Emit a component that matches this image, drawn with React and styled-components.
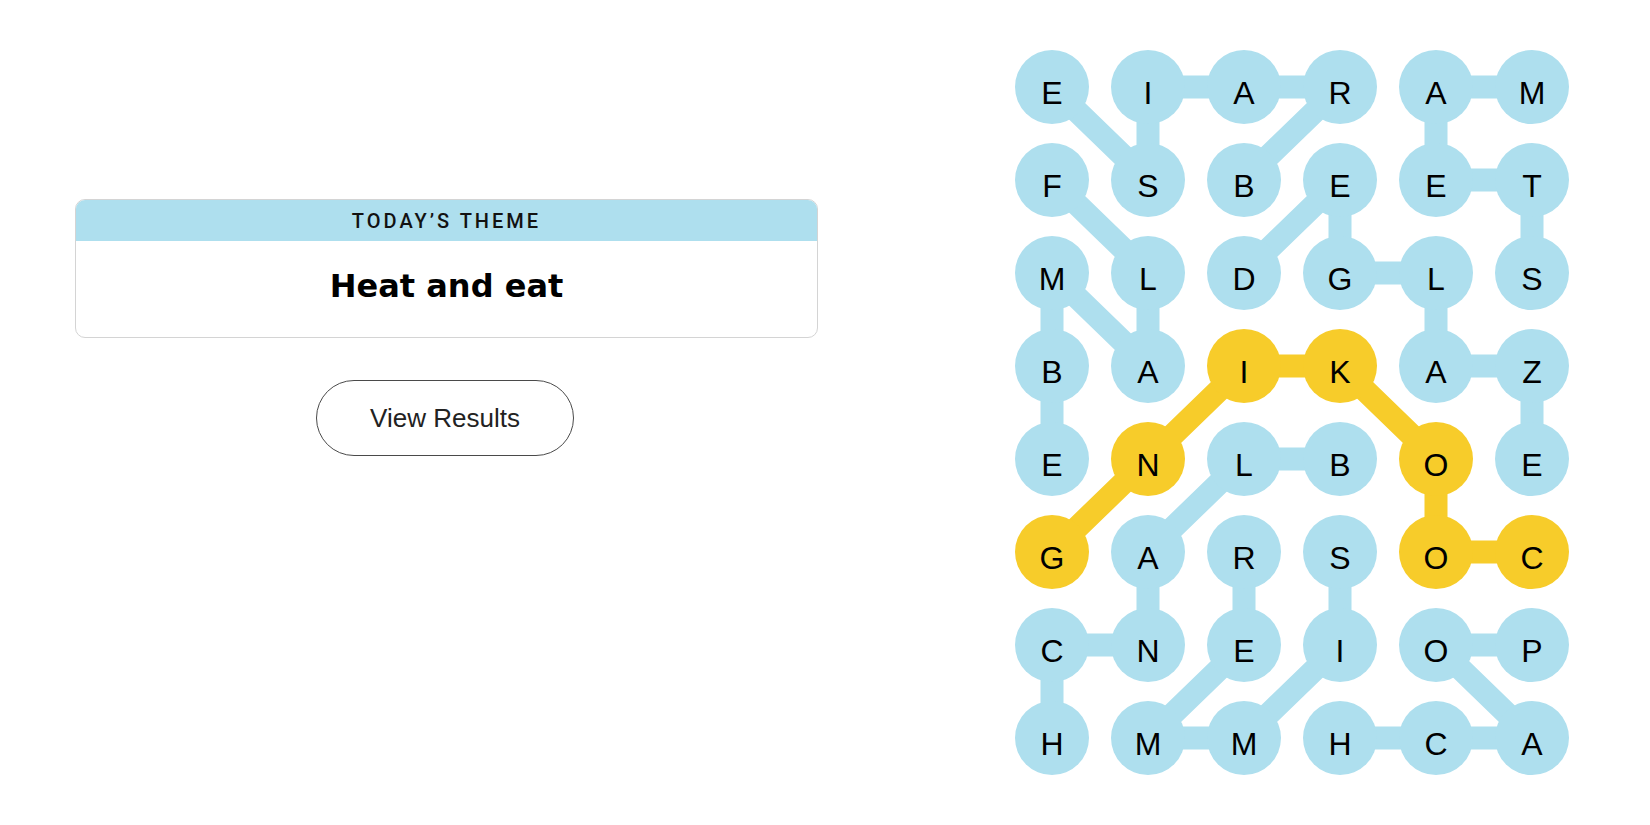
import styled, { createGlobalStyle } from 'styled-components';

const GlobalStyle = createGlobalStyle`
  html, body {
    margin: 0;
    padding: 0;
    background: #ffffff;
  }
  body {
    font-family: "Liberation Sans", Arial, sans-serif;
    color: #121212;
  }
`;

const BLUE = '#aedfee';
const YELLOW = '#f7cc2a';

const CELL = 74;
const COL_STEP = 96;
const ROW_STEP = 93;

const grid = [
    'EIARAM',
    'FSBEET',
    'MLDGLS',
    'BAIKAZ',
    'ENLBOE',
    'GARSOC',
    'CNEIOP',
    'HMMHCA',
];

// words found so far, as [row, col] paths
const words = [
    [[1, 2], [0, 3], [0, 2], [0, 1], [1, 1], [0, 0]],
    [[2, 5], [1, 5], [1, 4], [0, 4], [0, 5]],
    [[1, 0], [2, 1], [3, 1], [2, 0], [3, 0], [4, 0]],
    [[2, 2], [1, 3], [2, 3], [2, 4], [3, 4], [3, 5], [4, 5]],
    [[4, 3], [4, 2], [5, 1], [6, 1], [6, 0], [7, 0]],
    [[5, 3], [6, 3], [7, 2], [7, 1], [6, 2], [5, 2]],
    [[6, 5], [6, 4], [7, 5], [7, 4], [7, 3]],
];

const spangram = [[5, 5], [5, 4], [4, 4], [3, 3], [3, 2], [4, 1], [5, 0]];

const isSpangram = (r, c) => spangram.some(([sr, sc]) => sr === r && sc === c);

const toPoints = (path) =>
    path.map(([r, c]) => `${CELL / 2 + c * COL_STEP},${CELL / 2 + r * ROW_STEP}`).join(' ');

const BOARD_W = 6 * CELL + 5 * (COL_STEP - CELL);
const BOARD_H = 8 * CELL + 7 * (ROW_STEP - CELL);

const App = () => {
    return (
        <>
            <GlobalStyle />
            <Page>
                <LeftPane>
                    <ThemeCard>
                        <ThemeHeader>Today’s Theme</ThemeHeader>
                        <ThemeBody>
                            <h1>Heat and eat</h1>
                        </ThemeBody>
                    </ThemeCard>
                    <ResultsButton>View Results</ResultsButton>
                </LeftPane>
                <RightPane>
                    <Board>
                        <Strands width={BOARD_W} height={BOARD_H}>
                            {words.map((w, i) => (
                                <polyline key={i} points={toPoints(w)} stroke={BLUE} />
                            ))}
                            <polyline points={toPoints(spangram)} stroke={YELLOW} />
                        </Strands>
                        <LetterGrid>
                            {grid.map((row, r) =>
                                row.split('').map((ch, c) => (
                                    <Letter key={`${r}-${c}`} $span={isSpangram(r, c)}>
                                        {ch}
                                    </Letter>
                                ))
                            )}
                        </LetterGrid>
                    </Board>
                </RightPane>
            </Page>
        </>
    );
};

const Page = styled.div`
    display: flex;
    min-height: 825px;
`;

const LeftPane = styled.div`
    width: 893px;
    box-sizing: border-box;
    padding: 199px 75px 0 75px;
    display: flex;
    flex-direction: column;
    align-items: center;
`;

const ThemeCard = styled.div`
    width: 100%;
    border: 1px solid #d4d4d4;
    border-radius: 10px;
    overflow: hidden;
    box-sizing: border-box;
`;

const ThemeHeader = styled.div`
    background: ${BLUE};
    height: 40px;
    display: flex;
    align-items: center;
    justify-content: center;
    text-transform: uppercase;
    font-family: Roboto, "Liberation Sans", sans-serif;
    font-weight: 500;
    font-size: 20px;
    letter-spacing: 3px;
    color: #121212;
    padding-top: 1px;
`;

const ThemeBody = styled.div`
    height: 96px;
    display: flex;
    align-items: center;
    justify-content: center;
    h1{
        margin: 0;
        font-family: "DejaVu Sans", "Liberation Sans", sans-serif;
        font-weight: 700;
        font-size: 32px;
        color: #000;
        margin-bottom: 6px;
    }
`;

const ResultsButton = styled.button`
    margin-top: 42px;
    width: 258px;
    height: 76px;
    border: 1px solid #4a4a4a;
    border-radius: 38px;
    background: #fff;
    font-family: "Liberation Sans", Arial, sans-serif;
    font-size: 26px;
    color: #222;
    cursor: pointer;
    margin-left: -3px;
`;

const RightPane = styled.div`
    padding: 50px 0 0 122px;
`;

const Board = styled.div`
    position: relative;
    width: ${BOARD_W}px;
`;

const Strands = styled.svg`
    position: absolute;
    left: 0;
    top: 0;
    polyline{
        fill: none;
        stroke-width: 23;
        stroke-linecap: round;
        stroke-linejoin: round;
    }
`;

const LetterGrid = styled.div`
    position: relative;
    display: grid;
    grid-template-columns: repeat(6, ${CELL}px);
    grid-auto-rows: ${CELL}px;
    column-gap: ${COL_STEP - CELL}px;
    row-gap: ${ROW_STEP - CELL}px;
`;

const Letter = styled.div`
    width: ${CELL}px;
    height: ${CELL}px;
    border-radius: 50%;
    background: ${(p) => (p.$span ? YELLOW : BLUE)};
    display: flex;
    align-items: center;
    justify-content: center;
    box-sizing: border-box;
    padding-top: 12px;
    font-family: "Liberation Sans", Arial, sans-serif;
    font-size: 32px;
    color: #000;
`;

export default App;
